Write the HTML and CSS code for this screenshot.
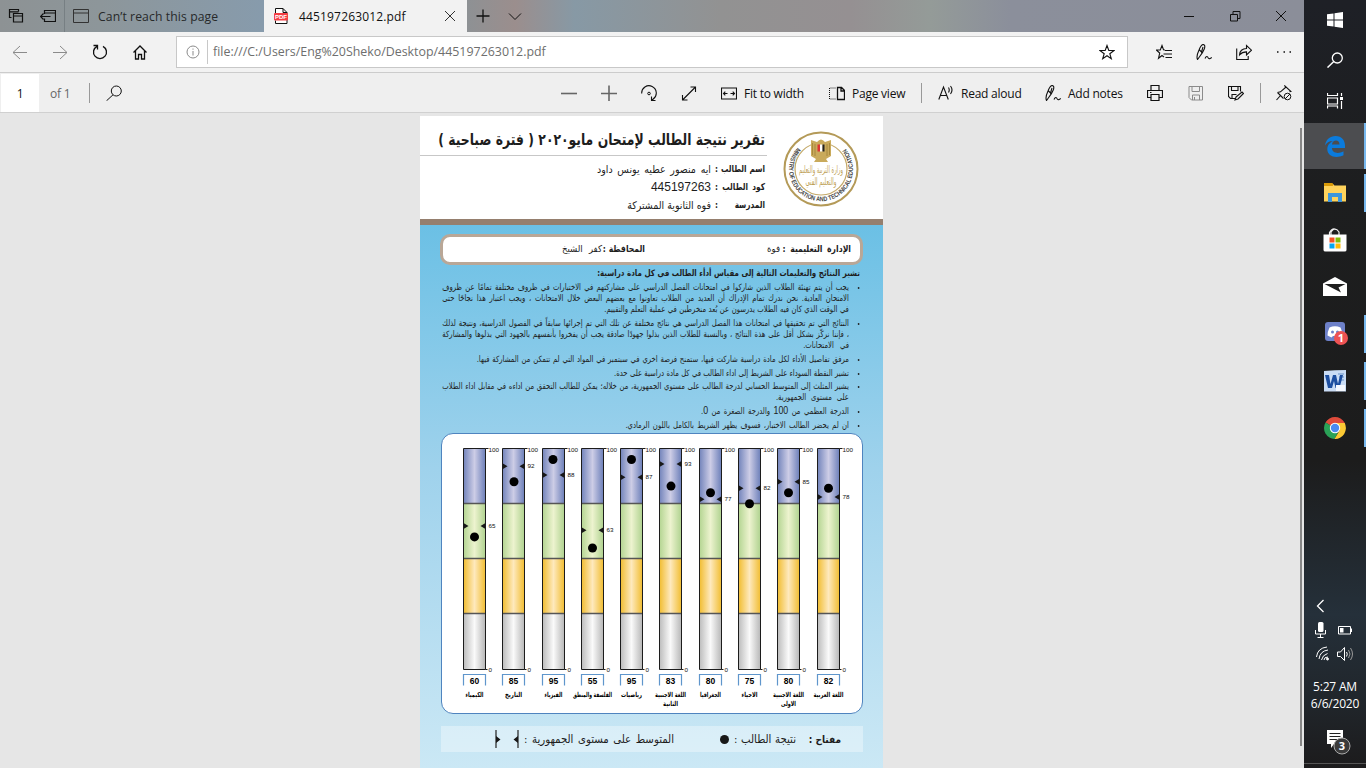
FILE: index.html
```html
<!DOCTYPE html>
<html lang="en">
<head>
<meta charset="utf-8">
<title>445197263012.pdf</title>
<link rel="stylesheet" href="styles.css">
</head>
<body>
<div class="desktop">
<main class="browser">
  <div class="tabs">
    <svg class="ic" viewBox="0 0 16 16"><path d="M3.500 9.500h-2v-8h9v2M1.500 3.800h9M5.500 5.500h9v8.500h-9zM5.500 8h9" stroke-width="1.200"/></svg>
    <svg class="ic" viewBox="0 0 16 16"><path d="M4.500 6v-3.500h11v11h-11v-3M4.500 5h11M0.500 8.500h10M3.500 5.500l-3 3 3 3" stroke-width="1.200"/></svg>
    <i class="tabline"></i>
    <svg class="ic dim" viewBox="0 0 16 16"><path d="M.5 1.500h15v13h-15zM.5 5h15"/></svg>
    <span class="t-first">Can’t reach this page</span>
    <div class="active-tab">
      <svg class="ic" viewBox="0 0 16 16"><path d="M2.500 5v-4.500h7.500l4 4v11h-11.500v-3M10 .5v4h4" fill="#fff"/><rect x="1" y="5" width="14" height="7.500" rx="1" fill="#f43d43" stroke="none"/><text x="8" y="11" class="pdf-mark">PDF</text></svg>
      <span class="t-active">445197263012.pdf</span>
      <svg class="ic dim" viewBox="0 0 16 16"><path d="M3 3l10 10M13 3L3 13"/></svg>
    </div>
    <svg class="ic" viewBox="0 0 16 16"><path d="M8 1.500v13M1.500 8h13" stroke-width="1.300"/></svg>
    <svg class="ic" viewBox="0 0 16 16"><path d="M2 5.500l6 6 6-6"/></svg>
    <svg class="ic" viewBox="0 0 16 16"><path d="M3 8.500h10"/></svg>
    <svg class="ic" viewBox="0 0 16 16"><path d="M3.500 6.500h7v6.500h-7zM6 6.500v-3h7v7h-2.500"/></svg>
    <svg class="ic" viewBox="0 0 16 16"><path d="M3 3l10 10M13 3L3 13"/></svg>
  </div>
  <div class="nav">
    <svg class="ic faint" viewBox="0 0 16 16"><path d="M1 8.500h14M8 2l-7 6.500 7 6.500"/></svg>
    <svg class="ic faint" viewBox="0 0 16 16"><path d="M1 8.500h14M8 2l7 6.500-7 6.500"/></svg>
    <svg class="ic" viewBox="0 0 16 16"><path d="M5 2.300a6.500 6.500 0 1 0 6 0M1.500 1.500h4v4" stroke-width="1.300"/></svg>
    <svg class="ic" viewBox="0 0 16 16"><path d="M1.500 8.500l6.500-6.500 6.500 6.500M3.500 7v8h3v-4.500h3v4.500h3v-8" stroke-width="1.300"/></svg>
    <div class="address">
      <svg class="ic faint" viewBox="0 0 16 16"><circle cx="8" cy="8" r="6"/><path d="M8 7v4.500M8 4.500v1.200"/></svg>
      <span class="url">file:///C:/Users/Eng%20Sheko/Desktop/445197263012.pdf</span>
      <svg class="ic" viewBox="0 0 16 16"><path d="M8 1.500l1.800 5h5.200l-4.200 3.200 1.500 5-4.300-3-4.300 3 1.500-5-4.200-3.200h5.200z" stroke-width="1.100"/></svg>
    </div>
    <svg class="ic" viewBox="0 0 16 16"><path d="M9 6l-1.500-.2-1.500-4.300-1.700 4.500h-4l3.400 3-1.200 5.300 3.500-2.800 2 1.500M9 6.500h7M7.500 10h8.500M9.500 13.500h6.500" stroke-width="1.100"/></svg>
    <svg class="ic pen" viewBox="0 0 16 16"><path d="M1.500 15.500q-1.500-3 1.500-9.500 2-5 4-5.500 2.500 0 1.500 4-1.500 4-5.500 9zM3.500 6l2 2 1.500-5M9 14.500c1.500-3 2.500-2 3.300-.5.800 1.200 2 .7 3.500-.5"/></svg>
    <svg class="ic" viewBox="0 0 16 16"><path d="M.7 4.500v11h11.500v-3.500M3.500 11c0-4 3-6.500 7-6.500v-3l5 4.700-5 4.700v-3c-3 0-5 .8-7 3.100z" stroke-width="1.100"/></svg>
    <svg class="ic" viewBox="0 0 16 16"><path d="M1 8h1.500M7.500 8h1.500M13.500 8h1.500" stroke-width="1.500"/></svg>
  </div>
  <div class="tools">
    <span class="pageno">1</span>
    <span class="of">of 1</span>
    <i></i>
    <svg class="ic" viewBox="0 0 16 16"><circle cx="10.300" cy="6" r="5"/><path d="M7 9.800l-6.500 6"/></svg>
    <svg class="ic grey" viewBox="0 0 16 16"><path d="M0 8.500h16" stroke-width="1.600"/></svg>
    <svg class="ic grey" viewBox="0 0 16 16"><path d="M0 8.500h16M8 .5v16" stroke-width="1.600"/></svg>
    <svg class="ic" viewBox="0 0 16 16"><path d="M.7 8.500a7.300 7.300 0 1 1 11.500 5.500l-1.500 1.500M10.500 11.500v4h4" stroke-width="1.100"/><circle cx="8" cy="8.500" r="1.300"/></svg>
    <svg class="ic" viewBox="0 0 16 16"><path d="M1.500 15l13-13M9.500 2h5v5M1.500 10v5h5" stroke-width="1.100"/></svg>
    <svg class="ic" viewBox="0 0 16 16"><path d="M.5 3h15v11h-15zM2.500 8.500h4M9.500 8.500h4M4.300 6.700l-1.800 1.800 1.800 1.800M11.700 6.700l1.800 1.800-1.800 1.800" stroke-width="1.100"/></svg>
    <span class="w-fit">Fit to width</span>
    <svg class="ic" viewBox="0 0 16 16"><path d="M8.500 2.500h4l3 3v9h-7zM12 2.500v3.500h3.500" stroke-width="1.300"/><path d="M6.500 3h-6v11h6" stroke-dasharray="1 1"/></svg>
    <span class="w-page">Page view</span>
    <i></i>
    <svg class="ic" viewBox="0 0 16 16"><path d="M.8 14.500L5.500 2l4.800 12.500M2.500 10.500h6.300M10.500 2.500q1.500 2.500 0 5M12.500 1q3 4 0 8" stroke-width="1.100"/></svg>
    <span class="w-read">Read aloud</span>
    <svg class="ic pen" viewBox="0 0 16 16"><path d="M1.500 15.500q-1.500-3 1.500-9.500 2-5 4-5.500 2.500 0 1.500 4-1.500 4-5.500 9zM3.500 6l2 2 1.500-5M9 14.500c1.500-3 2.500-2 3.300-.5.800 1.200 2 .7 3.500-.5"/></svg>
    <span class="w-add">Add notes</span>
    <svg class="ic" viewBox="0 0 16 16"><path d="M4 5.500v-5h8v5M4 12.500h-3.500v-7h15v7h-3.500M4 9.500h8v6h-8z" stroke-width="1.200"/><path d="M3 7.500h1.500"/></svg>
    <svg class="ic faint" viewBox="0 0 16 16"><path d="M1 1.500h13.500v13.500h-11l-2.500-2.500zM4 1.500v5h7.500v-5M4.500 15v-5h7v5M6.500 12v3"/></svg>
    <svg class="ic" viewBox="0 0 16 16"><path d="M7 13.500h-4.500l-2-2v-10h12v5M3.500 1.500v4h6.500v-4M4 13.500v-4h4.500M8 12l6-5 1.500 1.500-5.500 5.500-3 1z" stroke-width="1.100"/></svg>
    <i></i>
    <svg class="ic" viewBox="0 0 16 16"><path d="M.5 15l4-4.500M1.500 7.500l3-.7 5-4.300-.5-1.500 6 5.500-1.500.3M1.500 7.500l6 6" stroke-width="1.100"/><circle cx="11.500" cy="11.500" r="3.300"/><path d="M9 14l5-5"/></svg>
  </div>
  <div class="viewer">
    <article class="sheet" lang="ar" dir="rtl">
      <header class="head">
        <svg class="seal" viewBox="0 0 78 78" direction="ltr">
          <defs><path id="ring" d="M15.500 17.500A32 32 0 1 0 62.500 17.500"/></defs>
          <circle cx="39" cy="39" r="36.500" fill="#fff" stroke="#b49a58" stroke-width="2"/>
          <circle cx="39" cy="39" r="26" fill="none" stroke="#c4a968" stroke-width="1.200"/>
          <text class="ringtext"><textPath href="#ring" textLength="146" lengthAdjust="spacingAndGlyphs">MINISTRY OF EDUCATION AND TECHNICAL EDUCATION</textPath></text>
          <path d="M29 10l6 2q4-5 8 0l6-2v16l-5 3 2 3h-14l2-3-5-3z" fill="#c9aa5b"/>
          <path d="M30.500 13v12M33 14v12M45 14v12M47.500 13v12" stroke="#9f8137" stroke-width=".8"/>
          <path d="M35.500 14.500h2.500v7h-2.500z" fill="#d33"/><path d="M38 14.500h2.500v7h-2.500z" fill="#fff"/><path d="M40.500 14.500h2v7h-2z" fill="#222"/>
          <text x="39" y="43" class="sealtext" textLength="44" lengthAdjust="spacingAndGlyphs">وزارة التربية والتعليم</text>
          <text x="39" y="55" class="sealtext" textLength="31" lengthAdjust="spacingAndGlyphs">والتعليم الفني</text>
        </svg>
        <div class="headtext">
          <h1><span class="j">تقرير نتيجة الطالب لإمتحان مايو٢٠٢٠ ( فترة صباحية )</span></h1>
          <p><b class="k j">اسم الطالب :</b><span class="j v1">ايه منصور عطيه يونس داود</span></p>
          <p><b class="k j">كود الطالب :</b><span class="num">445197263</span></p>
          <p><b class="k j">المدرسة :</b><span class="j v3">فوه الثانوية المشتركة</span></p>
        </div>
      </header>
      <section class="body">
        <div class="info"><b class="j i1">الإدارة التعليمية :</b><span class="i2">فوة</span><b class="j i3">المحافظة :</b><span class="j i4">كفر الشيخ</span></div>
        <h2 class="j">تشير النتائج والتعليمات التالية إلى مقياس أدأء الطالب في كل مادة دراسية:</h2>
        <ul>
          <li><span class="j">يجب أن يتم تهنئة الطلاب الذين شاركوا في امتحانات الفصل الدراسي على مشاركتهم في الاختبارات في ظروف مختلفة تمامًا عن ظروف</span><span class="j">الامتحان العادية. نحن ندرك تمام الإدراك أن العديد من الطلاب تعاونوا مع بعضهم البعض خلال الامتحانات ، ويجب اعتبار هذا نجاحًا حتى</span><span class="j w245">في الوقت الذي كان فيه الطلاب يدرسون عن بُعد منخرطين في عملية التعلم والتقييم.</span></li>
          <li><span class="j">النتائج التي تم تحقيقها في امتحانات هذا الفصل الدراسي هي نتائج مختلفة عن تلك التي تم إجرائها سابقاً في الفصول الدراسية، ونتيجة لذلك</span><span class="j">، فإننا نركّز بشكل أقل على هذة النتائج ، وبالنسبة للطلاب الذين بذلوا جهودًا صادقة يجب أن يفخروا بأنفسهم بالجهود التي بذلوها والمشاركة</span><span class="j w44">في الامتحانات.</span></li>
          <li><span class="j w372">مرفق تفاصيل الأداء لكل مادة دراسية شاركت فيها، ستمنح فرصة اخري في سبتمبر في المواد التي لم تتمكن من المشاركة فيها.</span></li>
          <li><span class="j w235">تشير النقطة السوداء على الشريط إلى اداء الطالب في كل مادة دراسية على حدة.</span></li>
          <li><span class="j">يشير المثلث إلى المتوسط الحسابي لدرجة الطالب على مستوي الجمهورية، من خلاله؛ يمكن للطالب التحقق من اداءه في مقابل اداء الطلاب</span><span class="j w71">على مستوى الجمهورية.</span></li>
          <li><span class="j w148">الدرجة العظمي من <em>100</em> والدرجة الصغرة من <em>0</em>.</span></li>
          <li><span class="j w223">ان لم يحضر الطالب الاختبار، فسوف يظهر الشريط بالكامل باللون الرمادي.</span></li>
        </ul>
        <div class="chart">
          <svg width="422" height="279" viewBox="0 0 422 279" direction="ltr">
            <defs>
              <linearGradient id="gb"><stop stop-color="#7384bb"/><stop offset=".5" stop-color="#cdcde6"/><stop offset="1" stop-color="#6c7fb9"/></linearGradient>
              <linearGradient id="gg"><stop stop-color="#b4d592"/><stop offset=".5" stop-color="#edf3cf"/><stop offset="1" stop-color="#afd28f"/></linearGradient>
              <linearGradient id="gy"><stop stop-color="#f1bd31"/><stop offset=".5" stop-color="#fee9bd"/><stop offset="1" stop-color="#f1bd31"/></linearGradient>
              <linearGradient id="gw"><stop stop-color="#bcbcbc"/><stop offset=".5" stop-color="#fafafa"/><stop offset="1" stop-color="#b7b7b7"/></linearGradient>
              <g id="bar">
                <path d="M0 0h22v55h-22z" fill="url(#gb)"/><path d="M0 55h22v55h-22z" fill="url(#gg)"/><path d="M0 110h22v55h-22z" fill="url(#gy)"/><path d="M0 165h22v56h-22z" fill="url(#gw)"/>
                <path d="M0 55h22M0 110h22M0 165h22" stroke="#555" stroke-width="1.300"/>
                <path d="M0 0h22v221h-22zM22 0h3M22 221h2" fill="none" stroke="#1c1c1c" stroke-width="1"/>
                <path d="M0 237v-11h22v11" fill="none" stroke="#5f96cc" stroke-width="1.200"/>
                <text x="25" y="3.500" class="tick" textLength="10.500" lengthAdjust="spacingAndGlyphs">100</text><text x="25" y="223" class="tick" textLength="3.500" lengthAdjust="spacingAndGlyphs">0</text>
              </g>
              <path id="avg" d="M0-3l5 3-5 3zM22-3l-5 3 5 3z" fill="#181818"/>
            </defs>
            <g transform="translate(22.500 14.500)"><use href="#bar"/><use href="#avg" y="77.400"/><text x="25" y="79.400" class="tick" textLength="7" lengthAdjust="spacingAndGlyphs">65</text><circle cx="11" cy="88.400" r="4.500"/><text x="11" y="235" class="score">60</text><text x="11" y="248" class="subj" textLength="18" lengthAdjust="spacingAndGlyphs">الكيمياء</text></g>
            <g transform="translate(61.500 14.500)"><use href="#bar"/><use href="#avg" y="17.700"/><text x="25" y="19.700" class="tick" textLength="7" lengthAdjust="spacingAndGlyphs">92</text><circle cx="11.500" cy="33.200" r="4.500"/><text x="11" y="235" class="score">85</text><text x="11" y="248" class="subj" textLength="17" lengthAdjust="spacingAndGlyphs">التاريخ</text></g>
            <g transform="translate(101.500 14.500)"><use href="#bar"/><use href="#avg" y="26.500"/><text x="25" y="28.500" class="tick" textLength="7" lengthAdjust="spacingAndGlyphs">88</text><circle cx="10.500" cy="11" r="4.500"/><text x="11" y="235" class="score">95</text><text x="11" y="248" class="subj" textLength="18" lengthAdjust="spacingAndGlyphs">الفيزياء</text></g>
            <g transform="translate(140.500 14.500)"><use href="#bar"/><use href="#avg" y="81.800"/><text x="25" y="83.800" class="tick" textLength="7" lengthAdjust="spacingAndGlyphs">63</text><circle cx="11" cy="99.500" r="4.500"/><text x="11" y="235" class="score">55</text><text x="11" y="248" class="subj" textLength="39" lengthAdjust="spacingAndGlyphs">الفلسفة والمنطق</text></g>
            <g transform="translate(179.500 14.500)"><use href="#bar"/><use href="#avg" y="28.700"/><text x="25" y="30.700" class="tick" textLength="7" lengthAdjust="spacingAndGlyphs">87</text><circle cx="11" cy="11" r="4.500"/><text x="11" y="235" class="score">95</text><text x="11" y="248" class="subj" textLength="21" lengthAdjust="spacingAndGlyphs">رياضيات</text></g>
            <g transform="translate(218.500 14.500)"><use href="#bar"/><use href="#avg" y="15.500"/><text x="25" y="17.500" class="tick" textLength="7" lengthAdjust="spacingAndGlyphs">93</text><circle cx="11.500" cy="37.600" r="4.500"/><text x="11" y="235" class="score">83</text><text x="11" y="248" class="subj" textLength="31" lengthAdjust="spacingAndGlyphs">اللغة الاجنبية</text><text x="11" y="257" class="subj" textLength="15" lengthAdjust="spacingAndGlyphs">الثانية</text></g>
            <g transform="translate(258.500 14.500)"><use href="#bar"/><use href="#avg" y="50.800"/><text x="25" y="52.800" class="tick" textLength="7" lengthAdjust="spacingAndGlyphs">77</text><circle cx="11" cy="44.200" r="4.500"/><text x="11" y="235" class="score">80</text><text x="11" y="248" class="subj" textLength="21" lengthAdjust="spacingAndGlyphs">الجغرافيا</text></g>
            <g transform="translate(297.500 14.500)"><use href="#bar"/><use href="#avg" y="39.800"/><text x="25" y="41.800" class="tick" textLength="7" lengthAdjust="spacingAndGlyphs">82</text><circle cx="11" cy="55.300" r="4.500"/><text x="11" y="235" class="score">75</text><text x="11" y="248" class="subj" textLength="16" lengthAdjust="spacingAndGlyphs">الاحياء</text></g>
            <g transform="translate(336.500 14.500)"><use href="#bar"/><use href="#avg" y="33.200"/><text x="25" y="35.200" class="tick" textLength="7" lengthAdjust="spacingAndGlyphs">85</text><circle cx="11" cy="44.200" r="4.500"/><text x="11" y="235" class="score">80</text><text x="11" y="248" class="subj" textLength="31" lengthAdjust="spacingAndGlyphs">اللغة الاجنبية</text><text x="11" y="257" class="subj" textLength="15" lengthAdjust="spacingAndGlyphs">الاولى</text></g>
            <g transform="translate(376.500 14.500)"><use href="#bar"/><use href="#avg" y="48.600"/><text x="25" y="50.600" class="tick" textLength="7" lengthAdjust="spacingAndGlyphs">78</text><circle cx="11" cy="39.800" r="4.500"/><text x="11" y="235" class="score">82</text><text x="11" y="248" class="subj" textLength="30" lengthAdjust="spacingAndGlyphs">اللغة العربية</text></g>
          </svg>
        </div>
        <div class="legend">
          <b class="j g1">مفتاح :</b><span class="j g2">نتيجة الطالب :</span><i></i><span class="j g3">المتوسط على مستوى الجمهورية :</span>
          <svg width="24" height="18" viewBox="0 0 24 18"><path d="M1 0v18M23 0v18" stroke="#222" stroke-width="1.200"/><path d="M1 6l4.500 3.500-4.500 3.500zM23 6l-4.500 3.500 4.500 3.500z" fill="#181818"/></svg>
        </div>
      </section>
    </article>
    <i class="thumb"></i>
  </div>
</main>
<aside class="taskbar">
  <div><svg width="16" height="16" viewBox="0 0 16 16"><path d="M0 2.300l6.500-.9v6.100h-6.500zM7.500 1.200l8.500-1.200v7.500h-8.500zM0 8.500h6.500v6.100l-6.500-.9zM7.500 8.500h8.500v7.500l-8.500-1.200z" fill="#fff"/></svg></div>
  <div><svg class="wl" width="16" height="16" viewBox="0 0 16 16"><circle cx="10.300" cy="6" r="5" stroke-width="1.300"/><path d="M6.800 9.600l-6.300 6" stroke-width="1.400"/></svg></div>
  <div class="tasks"><svg class="wl" width="16" height="16" viewBox="0 0 16 16"><path d="M.5 0v2.500h10v-2.500M.5 5h10v6h-10zM.5 15.500v-2.500h10v2.500M14.500 0v3M14.500 8v8" stroke-width="1.200"/><path d="M13 4h3v3h-3z" fill="#fff" stroke="none"/></svg></div>
  <div class="on edge"><svg width="20" height="21" viewBox="0 0 20 21"><path d="M0 9.500C1 3.500 5 0 10.500 0 17 0 20 4.500 20 9.500v2.500H7c0 5.500 7 6 11.500 3.300v4C11 23 2 20.500 2.300 13 2.500 9 5 6.500 8 5 4 5 1.500 7 0 9.500zM7 8.500h7.500C14.500 6 13 4.500 11 4.500S7.300 6 7 8.500z" fill="#0b7bdc" fill-rule="evenodd"/></svg></div>
  <div class="on short"><svg width="22" height="19" viewBox="0 0 22 19"><path d="M0 1h9l1.500 1.500h11.500v16H0z" fill="#ffd35c"/><path d="M0 0h8.500l1 2-1 1H0z" fill="#d99a08"/><path d="M4 19v-9h14v9h-4v-5H8v5z" fill="#3d96db"/></svg></div>
  <div><svg width="24" height="24" viewBox="0 0 24 24"><path d="M8 7V4q4-6 8 0v3M6.500 7V4.500q3-5 6.500-3" fill="none" stroke="#eee" stroke-width="1.200"/><path d="M.5 6.500h23v15.500q0 1.500-2 1.500h-19q-2 0-2-1.500z" fill="#fff"/><path d="M6.500 9.500h5v5h-5z" fill="#f35325"/><path d="M12.500 9.500h5v5h-5z" fill="#81bc06"/><path d="M6.500 15.500h5v5h-5z" fill="#05a6f0"/><path d="M12.500 15.500h5v5h-5z" fill="#ffba08"/></svg></div>
  <div><svg width="24" height="19" viewBox="0 0 24 19"><path d="M0 6.500L12 0l12 6.500V19H0z" fill="#fff"/><path d="M1.500 7h21l-7 3.500 2.500 5z" fill="#1f1f1f"/></svg></div>
  <div class="on"><svg width="25" height="24" viewBox="0 0 25 24"><rect x="2" y="0" width="20" height="19" rx="3" fill="#6d80c8"/><path d="M6.500 5.500q5.500-2.500 11 0 2 4 2 8l-4 2-1.500-1.500h-4L8.500 15.500l-4-2q0-4 2-8z" fill="#fff"/><circle cx="9.500" cy="10" r="1.500" fill="#6d80c8"/><circle cx="14.500" cy="10" r="1.500" fill="#6d80c8"/><circle cx="18" cy="16" r="7" fill="#ee5253"/><text x="18" y="20" class="badge">1</text></svg></div>
  <div class="on"><svg width="22" height="22" viewBox="0 0 22 22"><path d="M0 1q11-1 22-1v21.500H0z" fill="#c9dcf5"/><path d="M14 4h6M15 7h5M15 10h5" stroke="#6791c9"/><path d="M1 5h4l1.500 9L9 5h3l2 9 2-9h3l-3.500 13h-4L10 11l-2 7H4z" fill="#1c4ea0"/><path d="M12 15h9v6h-9z" fill="#f4f8ff"/></svg></div>
  <div class="on"><svg width="22" height="22" viewBox="0 0 22 22"><path d="M11 11L1.500 5.500A11 11 0 0 1 20.500 5.500L21 7H11z" fill="#df4b3b"/><path d="M1.500 5.500A11 11 0 0 0 10.500 22L15 13.500 11 11z" fill="#2aa257"/><path d="M20.700 6H11l4.500 7.500L10.500 22A11 11 0 0 0 20.700 6z" fill="#fcc934"/><circle cx="11" cy="11" r="5.200" fill="#fff"/><circle cx="11" cy="11" r="4.200" fill="#4a8bf0"/></svg></div>
  <div class="tray">
    <svg class="wl" width="62" height="84" viewBox="0 0 62 84">
      <path d="M19.500 6l-6 6 6 6" stroke-width="1.300"/>
      <rect x="14" y="28" width="5.500" height="10" rx="1.500" fill="#fff" stroke="none"/><path d="M11.500 36v4h10v-4M16.500 40v3M13.500 43.500h6"/>
      <path d="M34.500 32.500h12v7.500h-12zM47.500 34.500v3.500"/><path d="M36 34h3.500v4.500h-3.500z" fill="#fff" stroke="none"/>
      <path d="M12.500 63q1-9 10.500-10M15 65q1-8 9-9M17.500 66q1-5 6-6.500M20 66q0-3 4-3"/><circle cx="23.500" cy="65" r="1" fill="#fff"/>
      <path d="M33.500 58h3l4-4.500v13l-4-4h-3zM42.500 58q1.500 2 0 4.500"/><path d="M44.500 56q3 4 0 8M46.500 54q4 6 0 12" stroke="#999"/>
    </svg>
    <span class="clock">5:27 AM</span><span class="clock">6/6/2020</span>
  </div>
  <div class="notify"><svg width="26" height="26" viewBox="0 0 26 26"><path d="M1 0h16v14h-9l-3 4v-4h-4z" fill="#fff"/><path d="M3.500 3.500h11M3.500 6.500h11M3.500 9.500h8" stroke="#222"/><circle cx="16" cy="16" r="8" fill="#3b3b3b" stroke="#aaa"/><text x="16" y="20.300" class="badge">3</text></svg></div>
</aside>
</div>
</body>
</html>
```
FILE: styles.css
```css
*{box-sizing:border-box}
body{margin:0;overflow:hidden;font:12px "Open Sans","Noto Sans",sans-serif;color:#111}
.desktop{display:grid;grid-template-columns:1304px 62px;height:768px}
.browser{display:grid;grid-template-rows:32px 41px 40px 655px;min-width:0}
svg{display:block;flex:none}
.ic{width:16px;height:16px;fill:none;stroke:#111;stroke-width:1}
.dim{stroke:#333}.grey{stroke:#666}.faint{stroke:#8b8b8b}
.pen{stroke-width:1.100}
.tabs,.nav,.tools{display:grid;align-items:center;white-space:nowrap}
.tabs{grid-template-columns:32px 24px 9px 25px 166px 211px 32px 674px 46px 46px 31px;padding-left:8px;background:linear-gradient(90deg,#8d9294 0,#8d969a 100px,#879bac 262px,#8e9194 468px,#9b8e8d 515px,#8799a5 575px,#929292 720px,#959092 850px,#949b98 930px,#8b8f9b 1010px,#8b8e99)}
.tabline{width:1px;height:32px;background:#777f83}
.active-tab{display:grid;grid-template-columns:26px 143px 16px;align-items:center;height:32px;width:203px;padding-left:9px;background:#f2f2f2}
.t-first{font-size:12.2px;letter-spacing:.1px;color:#27292a}
.t-active{font-size:12px;letter-spacing:.16px}
.pdf-mark{font:bold 6px "Liberation Sans",sans-serif;fill:#fff;stroke:none;text-anchor:middle}
.nav{grid-template-columns:40px 40px 40px 44px 980px 40px 40px 40px 28px;padding-left:12px;background:#f2f2f2;border-bottom:1px solid #ccc}
.address{width:952px;height:32px;background:#fff;border:1px solid #c8c8c8;display:grid;grid-template-columns:22px 892px 16px;align-items:center;padding-left:8px}
.url{border-left:1px solid #c8c8c8;line-height:24px;padding-left:5px;color:#6e6e6e;font-size:12.4px;letter-spacing:0}
.tools{grid-template-columns:50px 39px 17px 455px 40px 40px 40px 40px 23px 85px 23px 69px 17px 23px 84px 23px 79px 41px 40px 32px 16px 28px;background:#efefef;border-bottom:1px solid #d0d0d0;font-size:12px;letter-spacing:-.23px}
.tools>span:not(.pageno){padding-top:1px}
.tools>i{width:1px;height:20px;background:#999}
.pageno{width:38px;height:38px;line-height:39px;margin-left:1px;text-align:center;background:#fff}
.of{color:#666}
.viewer{background:#e6e6e6;display:grid;grid-template-columns:463px 1fr 2px;padding:3px 2px 0 420px;overflow:hidden}
.thumb{grid-column:3;height:618px;margin-top:12px;background:#868686}
.sheet{font-family:"DejaVu Sans Condensed","DejaVu Sans",sans-serif;font-stretch:condensed;color:#1d1d1d;height:652px;background:#fff;overflow:hidden}
.j{display:block;text-align:justify;text-align-last:justify;white-space:nowrap}
.head{height:109px;border-bottom:6px solid #957f6e;display:flex;padding:14px 23px 0 0}
.seal{width:78px;height:78px;direction:ltr}
.ringtext{font:bold 6.500px "Liberation Sans",sans-serif;fill:#444}
.sealtext{font-size:10px;fill:#bd9f55;text-anchor:middle}
.headtext{width:347px;margin-right:15px;font-size:10.5px}
.headtext h1{height:26px;margin:0 0 4px;padding:0 2px;border-bottom:1px solid #c7c7c7;font-size:16px;line-height:19px}
.headtext h1 .j{width:380px;transform:scaleX(.86);transform-origin:right}
.headtext p{margin:0;display:flex;height:18px;line-height:18px;padding-right:2px}
.k{width:58px;margin-left:-4px;font-size:9.500px;transform:scaleX(.86);transform-origin:right}
.v1{width:114px}.v3{width:82px}
.num{font:12px/18px "Liberation Sans",sans-serif}
.body{height:543px;background:linear-gradient(#6bc0e5,#9fd2ec 45%,#cbe8f5);padding:9px 20px 0 20px}
.info{height:31px;border:3px solid #b9a797;border-radius:10px;background:#fff;display:flex;padding-right:9px;font-size:9.5px;line-height:24px;white-space:nowrap}
.info b{font-size:9.500px;transform:scaleX(.9);transform-origin:right}
.i1{width:76px;margin-left:-7px}.i2{width:137px;padding-right:2px}.i3{width:47px;margin-left:-4px}.i4{width:40px}
.body h2{width:292px;font-size:8.8px;line-height:12px;margin:2px 3px 3px;transform:scaleX(.9);transform-origin:right}
ul{list-style:none;margin:0;padding:0 16px 0 0;width:485px;font-size:8.7px;line-height:11.2px;height:151px;transform:scaleX(.88);transform-origin:right}
li{position:relative;margin-bottom:2.400px}
li:before{content:"";position:absolute;right:-12px;top:5px;width:2px;height:2px;border-radius:1px;background:#222}
ul .j{width:462px}
ul .w245{width:278px}ul .w44{width:52px}ul .w372{width:423px}ul .w235{width:267px}ul .w71{width:83px}ul .w148{width:168px}ul .w223{width:254px}
em{font:10px/1 "Liberation Sans",sans-serif}
.chart{width:422px;height:281px;border:1.500px solid #4f84bf;border-radius:12px;background:#fff}
.chart svg{direction:ltr;margin:0 -1px}
.tick{font:5.800px "Liberation Sans",sans-serif;fill:#111}
.score{font:bold 8.500px "Liberation Sans",sans-serif;text-anchor:middle}
.subj{font-size:6.800px;font-weight:bold;text-anchor:middle}
.legend{width:422px;height:26px;margin-top:12px;background:rgba(255,255,255,.35);display:flex;align-items:center;padding-right:22px;font-size:11.3px}
.g1{width:29px;font-size:10px}.g2{width:62px;margin-right:16px}.legend i{width:9px;height:9px;border-radius:50%;background:#181818;margin-right:5px}.g3{width:150px;margin:0 46px 0 5px}
.taskbar{display:grid;grid-template-rows:40px 40px 42px repeat(7,47px) 264px 53px;background:linear-gradient(#1e2026,#1d1e1f 25%,#1c1c1c 60%,#25303a 80%,#20252a 92%,#1c1b1c);color:#fff}
.taskbar>div{display:flex;align-items:center;justify-content:center}
.wl{fill:none;stroke:#fff;stroke-width:1}
.on{background:linear-gradient(#78b9ef,#78b9ef) right center/2px 38px no-repeat}
.taskbar>.edge{height:46px;margin-top:1px;background:linear-gradient(#78b9ef,#78b9ef) right center/2px 46px no-repeat,#4c4d50}
.badge{font:bold 11px "Open Sans",sans-serif;fill:#fff;text-anchor:middle}
.taskbar .tray{margin-top:143px;height:121px;flex-direction:column;justify-content:flex-start}
.clock{font-size:12px;letter-spacing:-.2px;line-height:17px}
.taskbar .notify{justify-content:flex-start;align-items:flex-start;padding:15px 0 0 22px;border-bottom:1px solid #555;height:49px}
```
